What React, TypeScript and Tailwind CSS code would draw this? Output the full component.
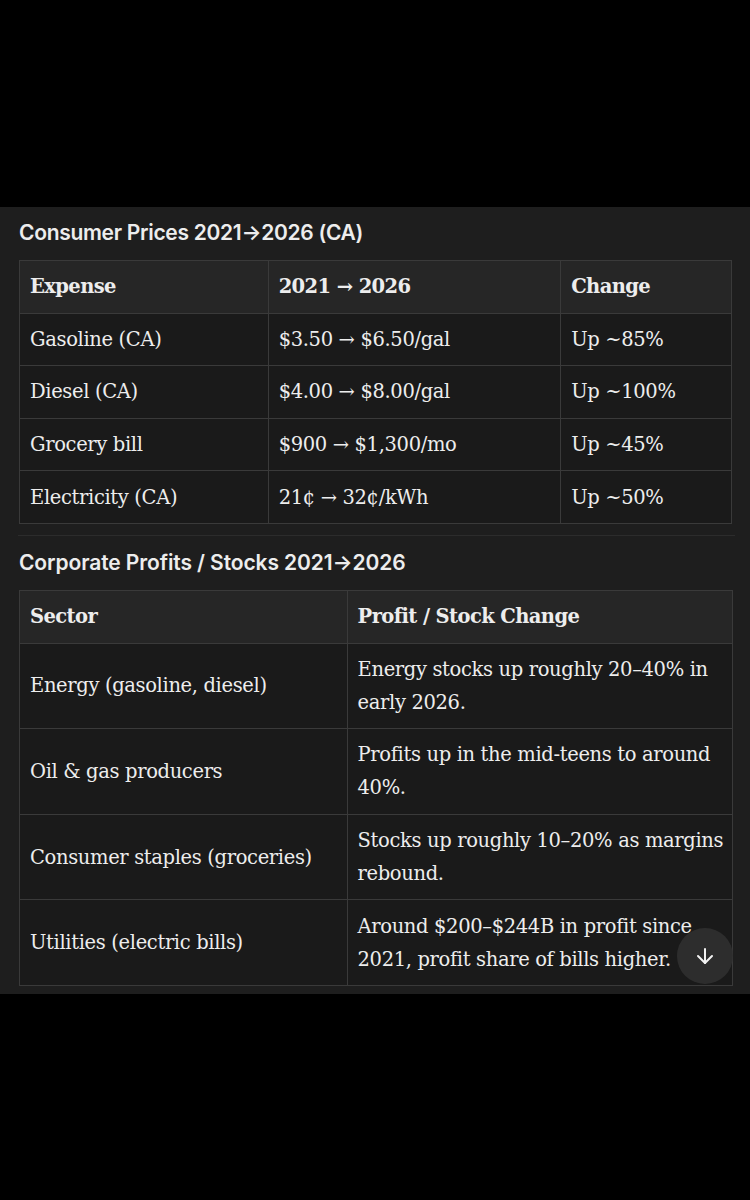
import React from "react";
import { ArrowDown } from "lucide-react";

const serif = { fontFamily: '"DejaVu Serif", "Liberation Serif", serif' };
const sans = { fontFamily: 'Inter, "Noto Sans", sans-serif' };

const t1 = [
  ["Gasoline (CA)", "$3.50 → $6.50/gal", "Up ~85%"],
  ["Diesel (CA)", "$4.00 → $8.00/gal", "Up ~100%"],
  ["Grocery bill", "$900 → $1,300/mo", "Up ~45%"],
  ["Electricity (CA)", "21¢ → 32¢/kWh", "Up ~50%"],
];

const t2 = [
  ["Energy (gasoline, diesel)", "Energy stocks up roughly 20–40% in early 2026."],
  ["Oil & gas producers", "Profits up in the mid-teens to around 40%."],
  ["Consumer staples (groceries)", "Stocks up roughly 10–20% as margins rebound."],
  ["Utilities (electric bills)", "Around $200–$244B in profit since 2021, profit share of bills higher."],
];

const th = "border border-[#3a3a3a] bg-[#262626] pl-[10px] pr-[6px] py-[9.3px] text-left align-middle font-bold tracking-[-0.6px]";
const td = "border border-[#3a3a3a] bg-[#1a1a1a] pl-[10px] pr-[6px] py-[9.3px] text-left align-middle font-normal";

export default function App() {
  return (
    <div className="w-[750px] min-h-[1200px] bg-black">
      <div className="h-[207px]" />
      <div className="bg-[#1e1e1e] px-[19px] pt-[13px] pb-[8px] text-[#ededed]">
        <h2 style={sans} className="text-[21px] leading-[26px] font-semibold tracking-[-0.3px] mb-[14px]">
          Consumer Prices 2021→2026 (CA)
        </h2>
        <table style={serif} className="w-[713px] border-collapse text-[19.5px] leading-[33px] tracking-[-0.35px]">
          <colgroup>
            <col className="w-[249px]" />
            <col className="w-[293px]" />
            <col className="w-[171px]" />
          </colgroup>
          <thead>
            <tr>
              <th className={th}>Expense</th>
              <th className={th}>2021 → 2026</th>
              <th className={th}>Change</th>
            </tr>
          </thead>
          <tbody>
            {t1.map((r) => (
              <tr key={r[0]}>
                {r.map((c, i) => (
                  <td key={i} className={td}>{c}</td>
                ))}
              </tr>
            ))}
          </tbody>
        </table>
        <div className="mt-[11px] h-px w-[717px] -ml-px bg-[#2c2c2c]" />
        <h2 style={sans} className="mt-[14px] text-[21px] leading-[26px] font-semibold tracking-[-0.1px] mb-[14px]">
          Corporate Profits / Stocks 2021→2026
        </h2>
        <div className="relative">
          <table style={serif} className="w-[714px] border-collapse text-[19.5px] leading-[33px] tracking-[-0.35px]">
            <colgroup>
              <col className="w-[328px]" />
              <col className="w-[386px]" />
            </colgroup>
            <thead>
              <tr>
                <th className={th}>Sector</th>
                <th className={th}>Profit / Stock Change</th>
              </tr>
            </thead>
            <tbody>
              {t2.map((r) => (
                <tr key={r[0]}>
                  {r.map((c, i) => (
                    <td key={i} className={td}>{c}</td>
                  ))}
                </tr>
              ))}
            </tbody>
          </table>
          <div className="absolute right-[-2px] bottom-[2px] flex h-[56px] w-[56px] items-center justify-center rounded-full bg-[#303030]/90">
            <ArrowDown size={24} strokeWidth={2} color="#f2f2f2" />
          </div>
        </div>
      </div>
    </div>
  );
}
